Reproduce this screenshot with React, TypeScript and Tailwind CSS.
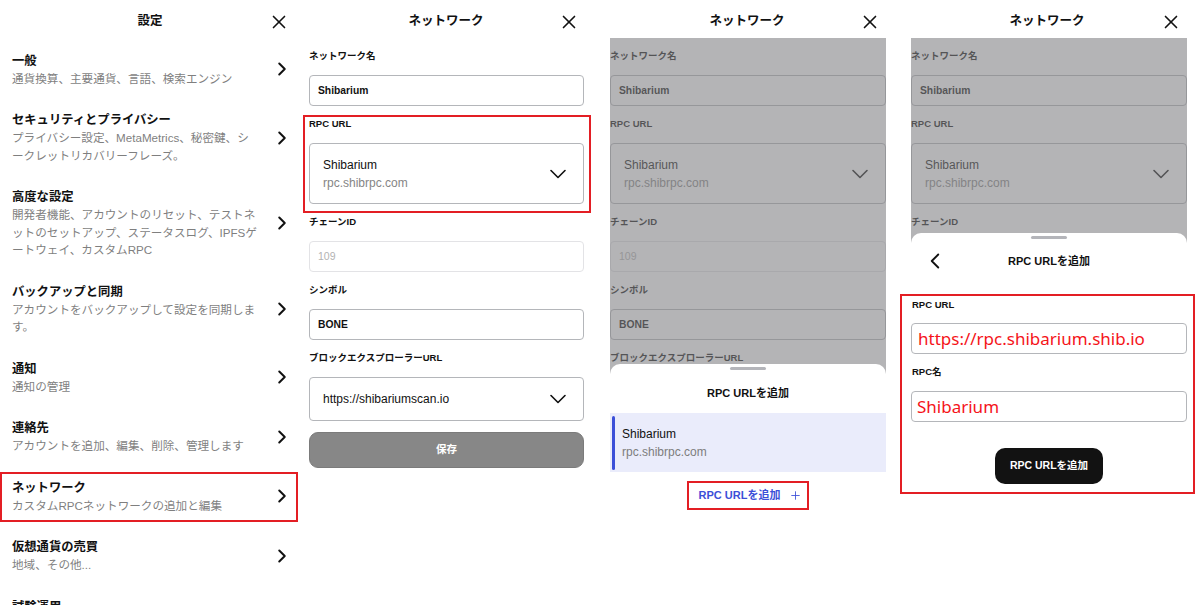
import { ChevronDown, ChevronLeft, ChevronRight, Plus, X } from "lucide-react";
import clsx from "clsx";

const settingsItems = [
  { title: "一般", lines: ["通貨換算、主要通貨、言語、検索エンジン"] },
  {
    title: "セキュリティとプライバシー",
    lines: ["プライバシー設定、MetaMetrics、秘密鍵、シ", "ークレットリカバリーフレーズ。"],
  },
  {
    title: "高度な設定",
    lines: [
      "開発者機能、アカウントのリセット、テストネ",
      "ットのセットアップ、ステータスログ、IPFSゲ",
      "ートウェイ、カスタムRPC",
    ],
  },
  { title: "バックアップと同期", lines: ["アカウントをバックアップして設定を同期しま", "す。"] },
  { title: "通知", lines: ["通知の管理"] },
  { title: "連絡先", lines: ["アカウントを追加、編集、削除、管理します"] },
  { title: "ネットワーク", lines: ["カスタムRPCネットワークの追加と編集"], marked: true },
  { title: "仮想通貨の売買", lines: ["地域、その他..."] },
  { title: "試験運用", lines: ["Snaps など"] },
];

function Header({ title, className }: { title: string; className?: string }) {
  return (
    <div
      className={clsx(
        "grid h-[38px] shrink-0 grid-cols-[24px_1fr_24px] items-center pt-[5px]",
        className,
      )}
    >
      <span />
      <h1 className="text-center text-[12.5px] font-bold text-[#111]">{title}</h1>
      <X size={22} strokeWidth={1.8} className="text-[#111]" />
    </div>
  );
}

function FieldLabel({ children }: { children: React.ReactNode }) {
  return (
    <div className="flex h-[37px] items-center text-[9.5px] font-bold text-[#111]">
      {children}
    </div>
  );
}

function TextBox({ value, muted }: { value: string; muted?: boolean }) {
  return (
    <div
      className={clsx(
        "flex h-[31px] items-center rounded-[4px] border bg-white px-[8px]",
        muted
          ? "border-[#e3e3e6] text-[10.5px] text-[#b3b3b3]"
          : "border-[#b4b6ba] text-[10.3px] font-bold text-[#111]",
      )}
    >
      {value}
    </div>
  );
}

function NetworkForm({ marked }: { marked?: boolean }) {
  return (
    <div>
      <FieldLabel>ネットワーク名</FieldLabel>
      <TextBox value="Shibarium" />

      <div className="relative">
        <FieldLabel>RPC URL</FieldLabel>
        <div className="flex h-[61px] items-center justify-between rounded-[4px] border border-[#b4b6ba] bg-white pl-[13px] pr-[11px]">
          <div className="text-[12px] leading-[18px]">
            <p className="text-[#111]">Shibarium</p>
            <p className="text-[#858585]">rpc.shibrpc.com</p>
          </div>
          <ChevronDown size={28} strokeWidth={1.4} className="text-[#111]" />
        </div>
        {marked && (
          <div className="pointer-events-none absolute -left-[6px] -right-[7px] top-[9px] -bottom-[9px] border-2 border-[#e31e24]" />
        )}
      </div>

      <FieldLabel>チェーンID</FieldLabel>
      <TextBox value="109" muted />

      <FieldLabel>シンボル</FieldLabel>
      <TextBox value="BONE" />

      <FieldLabel>ブロックエクスプローラーURL</FieldLabel>
      <div className="flex h-[44px] items-center justify-between rounded-[4px] border border-[#b4b6ba] bg-white pl-[13px] pr-[11px]">
        <span className="text-[12px] text-[#111]">https://shibariumscan.io</span>
        <ChevronDown size={28} strokeWidth={1.4} className="text-[#111]" />
      </div>

      <button className="mt-[11px] flex h-[36px] w-full items-center justify-center rounded-[9px] border border-[#7b7b7b] bg-[#878787] text-[10.5px] font-bold text-white">
        保存
      </button>
    </div>
  );
}

function SheetHandle() {
  return (
    <div className="flex justify-center pt-[3px]">
      <div className="h-[3px] w-[36px] rounded-full bg-[#b4b5ba]" />
    </div>
  );
}

function SettingsPanel() {
  return (
    <section className="flex h-full w-[300px] shrink-0 flex-col overflow-hidden">
      <Header title="設定" className="pl-[8px] pr-[8px]" />
      <div className="pt-[1.5px]">
        {settingsItems.map((item) => (
          <div key={item.title} className="relative flex items-center py-[12px] pl-[12px] pr-[7px]">
            <div className="min-w-0 flex-1">
              <p className="text-[12.3px] font-bold leading-[18px] text-[#111]">{item.title}</p>
              <p className="whitespace-nowrap text-[11.6px] leading-[17.5px] text-[#7f7f7f]">
                {item.lines.map((line, i) => (
                  <span key={i} className="block">
                    {line}
                  </span>
                ))}
              </p>
            </div>
            <ChevronRight size={22} strokeWidth={2.2} className="shrink-0 text-[#111]" />
            {item.marked && (
              <div className="pointer-events-none absolute left-0 right-[2px] top-[5px] bottom-[4px] border-2 border-[#e31e24]" />
            )}
          </div>
        ))}
      </div>
    </section>
  );
}

function NetworkPanel() {
  return (
    <section className="flex h-full w-[300px] shrink-0 flex-col overflow-hidden">
      <Header title="ネットワーク" className="pl-[10px] pr-[18px]" />
      <div className="pl-[9px] pr-[16px]">
        <NetworkForm marked />
      </div>
    </section>
  );
}

function RpcListPanel() {
  return (
    <section className="flex h-full w-[300px] shrink-0 flex-col overflow-hidden">
      <Header title="ネットワーク" className="pl-[11px] pr-[17px]" />
      <div className="relative ml-[10px] mr-[14px] flex-1">
        <NetworkForm />
        <div className="absolute inset-0 bg-[rgba(130,130,134,0.6)]" />

        <div className="absolute inset-x-0 top-[326px] bottom-0 rounded-t-[10px] bg-white">
          <SheetHandle />
          <div className="flex h-[43px] items-center justify-center pt-[3px] text-[11px] font-bold text-[#111]">
            RPC URLを追加
          </div>
          <div className="relative bg-[#eaecfb] pb-[11px] pl-[12px] pt-[12px] text-[12px] leading-[18px]">
            <div className="absolute bottom-[2px] left-[2px] top-[3px] w-[3px] rounded-full bg-[#3b4fd8]" />
            <p className="text-[#111]">Shibarium</p>
            <p className="text-[#7d7d7d]">rpc.shibrpc.com</p>
          </div>
          <div className="mt-[9px] flex justify-center">
            <div className="flex h-[29px] items-center gap-[9px] border-2 border-[#e31e24] pl-[10px] pr-[5px] text-[11px] font-semibold text-[#3c4fd8]">
              RPC URLを追加
              <Plus size={13} strokeWidth={1.6} />
            </div>
          </div>
        </div>
      </div>
    </section>
  );
}

function AddRpcPanel() {
  return (
    <section className="flex h-full w-[300px] shrink-0 flex-col overflow-hidden">
      <Header title="ネットワーク" className="pl-[10px] pr-[16px]" />
      <div className="relative ml-[11px] mr-[13px] flex-1">
        <NetworkForm />
        <div className="absolute inset-0 bg-[rgba(130,130,134,0.6)]" />

        <div className="absolute inset-x-0 top-[195px] bottom-0 rounded-t-[10px] bg-white">
          <SheetHandle />
          <div className="grid h-[44px] grid-cols-[40px_1fr_40px] items-center">
            <ChevronLeft size={26} strokeWidth={1.7} className="ml-[11px] text-[#111]" />
            <h2 className="text-center text-[11px] font-bold text-[#111]">RPC URLを追加</h2>
            <span />
          </div>

          <div className="relative mt-[11px] pb-[10px]">
            <div className="h-[29px] pl-[1px] pt-[5px] text-[9.5px] font-bold leading-[12px] text-[#111]">
              RPC URL
            </div>
            <div className="flex h-[31px] items-center rounded-[4px] border border-[#b4b6ba] bg-white px-[6px] font-['Noto_Sans',sans-serif] text-[17px] text-[#f5141a]">
              https://rpc.shibarium.shib.io
            </div>
            <div className="flex h-[37px] items-center pl-[1px] text-[9.5px] font-bold text-[#111]">
              RPC名
            </div>
            <div className="flex h-[31px] items-center rounded-[4px] border border-[#b4b6ba] bg-white px-[5px] font-['Noto_Sans',sans-serif] text-[17px] text-[#f5141a]">
              Shibarium
            </div>
            <button className="mx-auto mt-[26px] flex h-[36px] w-[108px] items-center justify-center rounded-[10px] bg-[#121212] text-[10.5px] font-bold text-white">
              RPC URLを追加
            </button>
            <div className="pointer-events-none absolute -left-[11px] -right-[8px] top-0 bottom-0 border-2 border-[#e31e24]" />
          </div>
        </div>
      </div>
    </section>
  );
}

export default function App() {
  return (
    <div className="flex h-[605px] w-[1200px] overflow-hidden bg-white font-['Liberation_Sans','Noto_Sans_CJK_JP',sans-serif]">
      <SettingsPanel />
      <NetworkPanel />
      <RpcListPanel />
      <AddRpcPanel />
    </div>
  );
}
